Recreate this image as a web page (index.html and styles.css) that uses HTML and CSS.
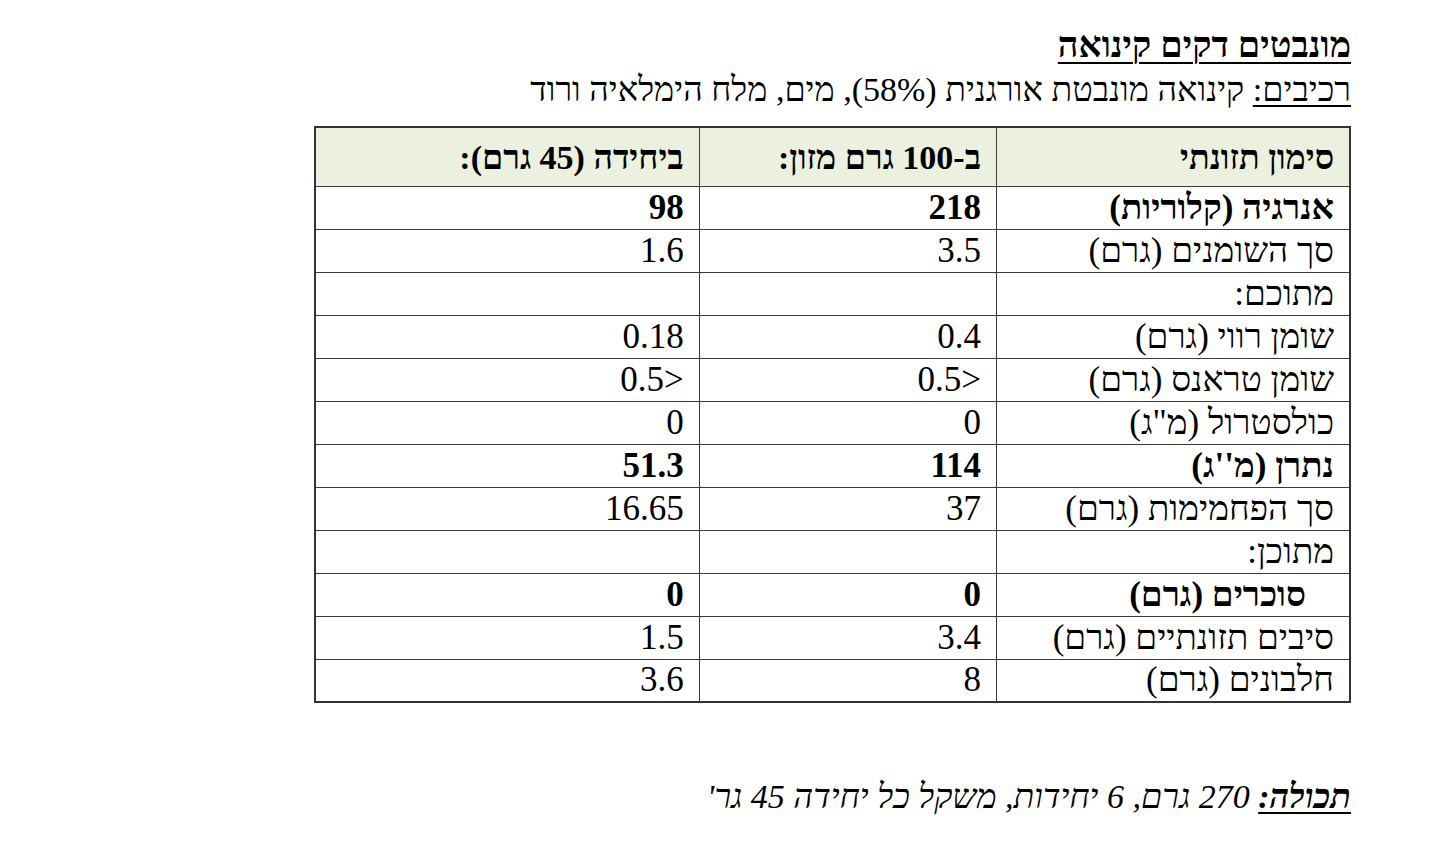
FILE: index.html
```html
<!DOCTYPE html>
<html lang="he" dir="rtl">
<head>
<meta charset="utf-8">
<title>מונבטים דקים קינואה</title>
<link rel="stylesheet" href="styles.css">
</head>
<body>
<div class="page">
  <h1 class="title">מונבטים דקים קינואה</h1>
  <p class="ingredients"><span class="ul">רכיבים:</span> קינואה מונבטת אורגנית (58%), מים, מלח הימלאיה ורוד</p>
  <table class="nutrition">
    <colgroup>
      <col class="c1"><col class="c2"><col class="c3">
    </colgroup>
    <thead>
      <tr class="head">
        <th>סימון תזונתי</th>
        <th>ב-100 גרם מזון:</th>
        <th>ביחידה (45 גרם):</th>
      </tr>
    </thead>
    <tbody>
      <tr class="bold"><td>אנרגיה (קלוריות)</td><td>218</td><td>98</td></tr>
      <tr><td>סך השומנים (גרם)</td><td>3.5</td><td>1.6</td></tr>
      <tr><td>מתוכם:</td><td></td><td></td></tr>
      <tr><td>שומן רווי (גרם)</td><td>0.4</td><td>0.18</td></tr>
      <tr><td>שומן טראנס (גרם)</td><td><bdi dir="ltr">0.5&gt;</bdi></td><td><bdi dir="ltr">0.5&gt;</bdi></td></tr>
      <tr><td>כולסטרול (מ"ג)</td><td>0</td><td>0</td></tr>
      <tr class="bold"><td>נתרן (מ''ג)</td><td>114</td><td>51.3</td></tr>
      <tr><td>סך הפחמימות (גרם)</td><td>37</td><td>16.65</td></tr>
      <tr><td>מתוכן:</td><td></td><td></td></tr>
      <tr class="bold"><td><span class="indent">סוכרים (גרם)</span></td><td>0</td><td>0</td></tr>
      <tr><td>סיבים תזונתיים (גרם)</td><td>3.4</td><td>1.5</td></tr>
      <tr><td>חלבונים (גרם)</td><td>8</td><td>3.6</td></tr>
    </tbody>
  </table>
  <p class="content"><span class="label">תכולה:</span> 270 גרם, 6 יחידות, משקל כל יחידה 45 גר'</p>
</div>
</body>
</html>
```

FILE: styles.css
```css
html, body {
  margin: 0;
  padding: 0;
  background: #ffffff;
}

body {
  font-family: "Liberation Serif", "Noto Serif Hebrew", "FreeSerif", "Times New Roman", serif;
  color: #000000;
}

.page {
  direction: rtl;
  padding: 24px 89px 0 0;
  display: flex;
  flex-direction: column;
  align-items: flex-start;
}

.title {
  margin: 0;
  font-size: 36px;
  font-weight: bold;
  line-height: 42px;
  text-decoration: underline;
  text-decoration-thickness: 2px;
  text-underline-offset: 5px;
}

.ingredients {
  margin: 4px 0 0 0;
  font-size: 34px;
  line-height: 40px;
}

.ingredients .ul {
  text-decoration: underline;
  text-decoration-thickness: 1.5px;
  text-underline-offset: 4px;
}

.nutrition {
  margin-top: 16px;
  border-collapse: collapse;
  width: 1037px;
  font-size: 35px;
  border: 2px solid #333333;
}

.nutrition col.c1 { width: 354px; }
.nutrition col.c2 { width: 298px; }
.nutrition col.c3 { width: 385px; }

.nutrition th,
.nutrition td {
  border: 1.5px solid #3a3a3a;
  text-align: right;
  padding: 0 15px 0 15px;
  line-height: 40px;
  vertical-align: middle;
}

.nutrition tr.head {
  height: 59px;
  background: #ebf1de;
}

.nutrition tr.head th {
  font-size: 34px;
  font-weight: bold;
  padding-top: 3px;
}

.nutrition tbody tr {
  height: 43px;
}

.nutrition tr.bold td {
  font-weight: bold;
}

.indent {
  display: inline-block;
  padding-right: 28px;
}

.content {
  margin: 74px 0 0 0;
  font-size: 34px;
  line-height: 40px;
  font-style: italic;
}

.content .label {
  font-weight: bold;
  text-decoration: underline;
  text-decoration-thickness: 2px;
  text-underline-offset: 4px;
}
```
